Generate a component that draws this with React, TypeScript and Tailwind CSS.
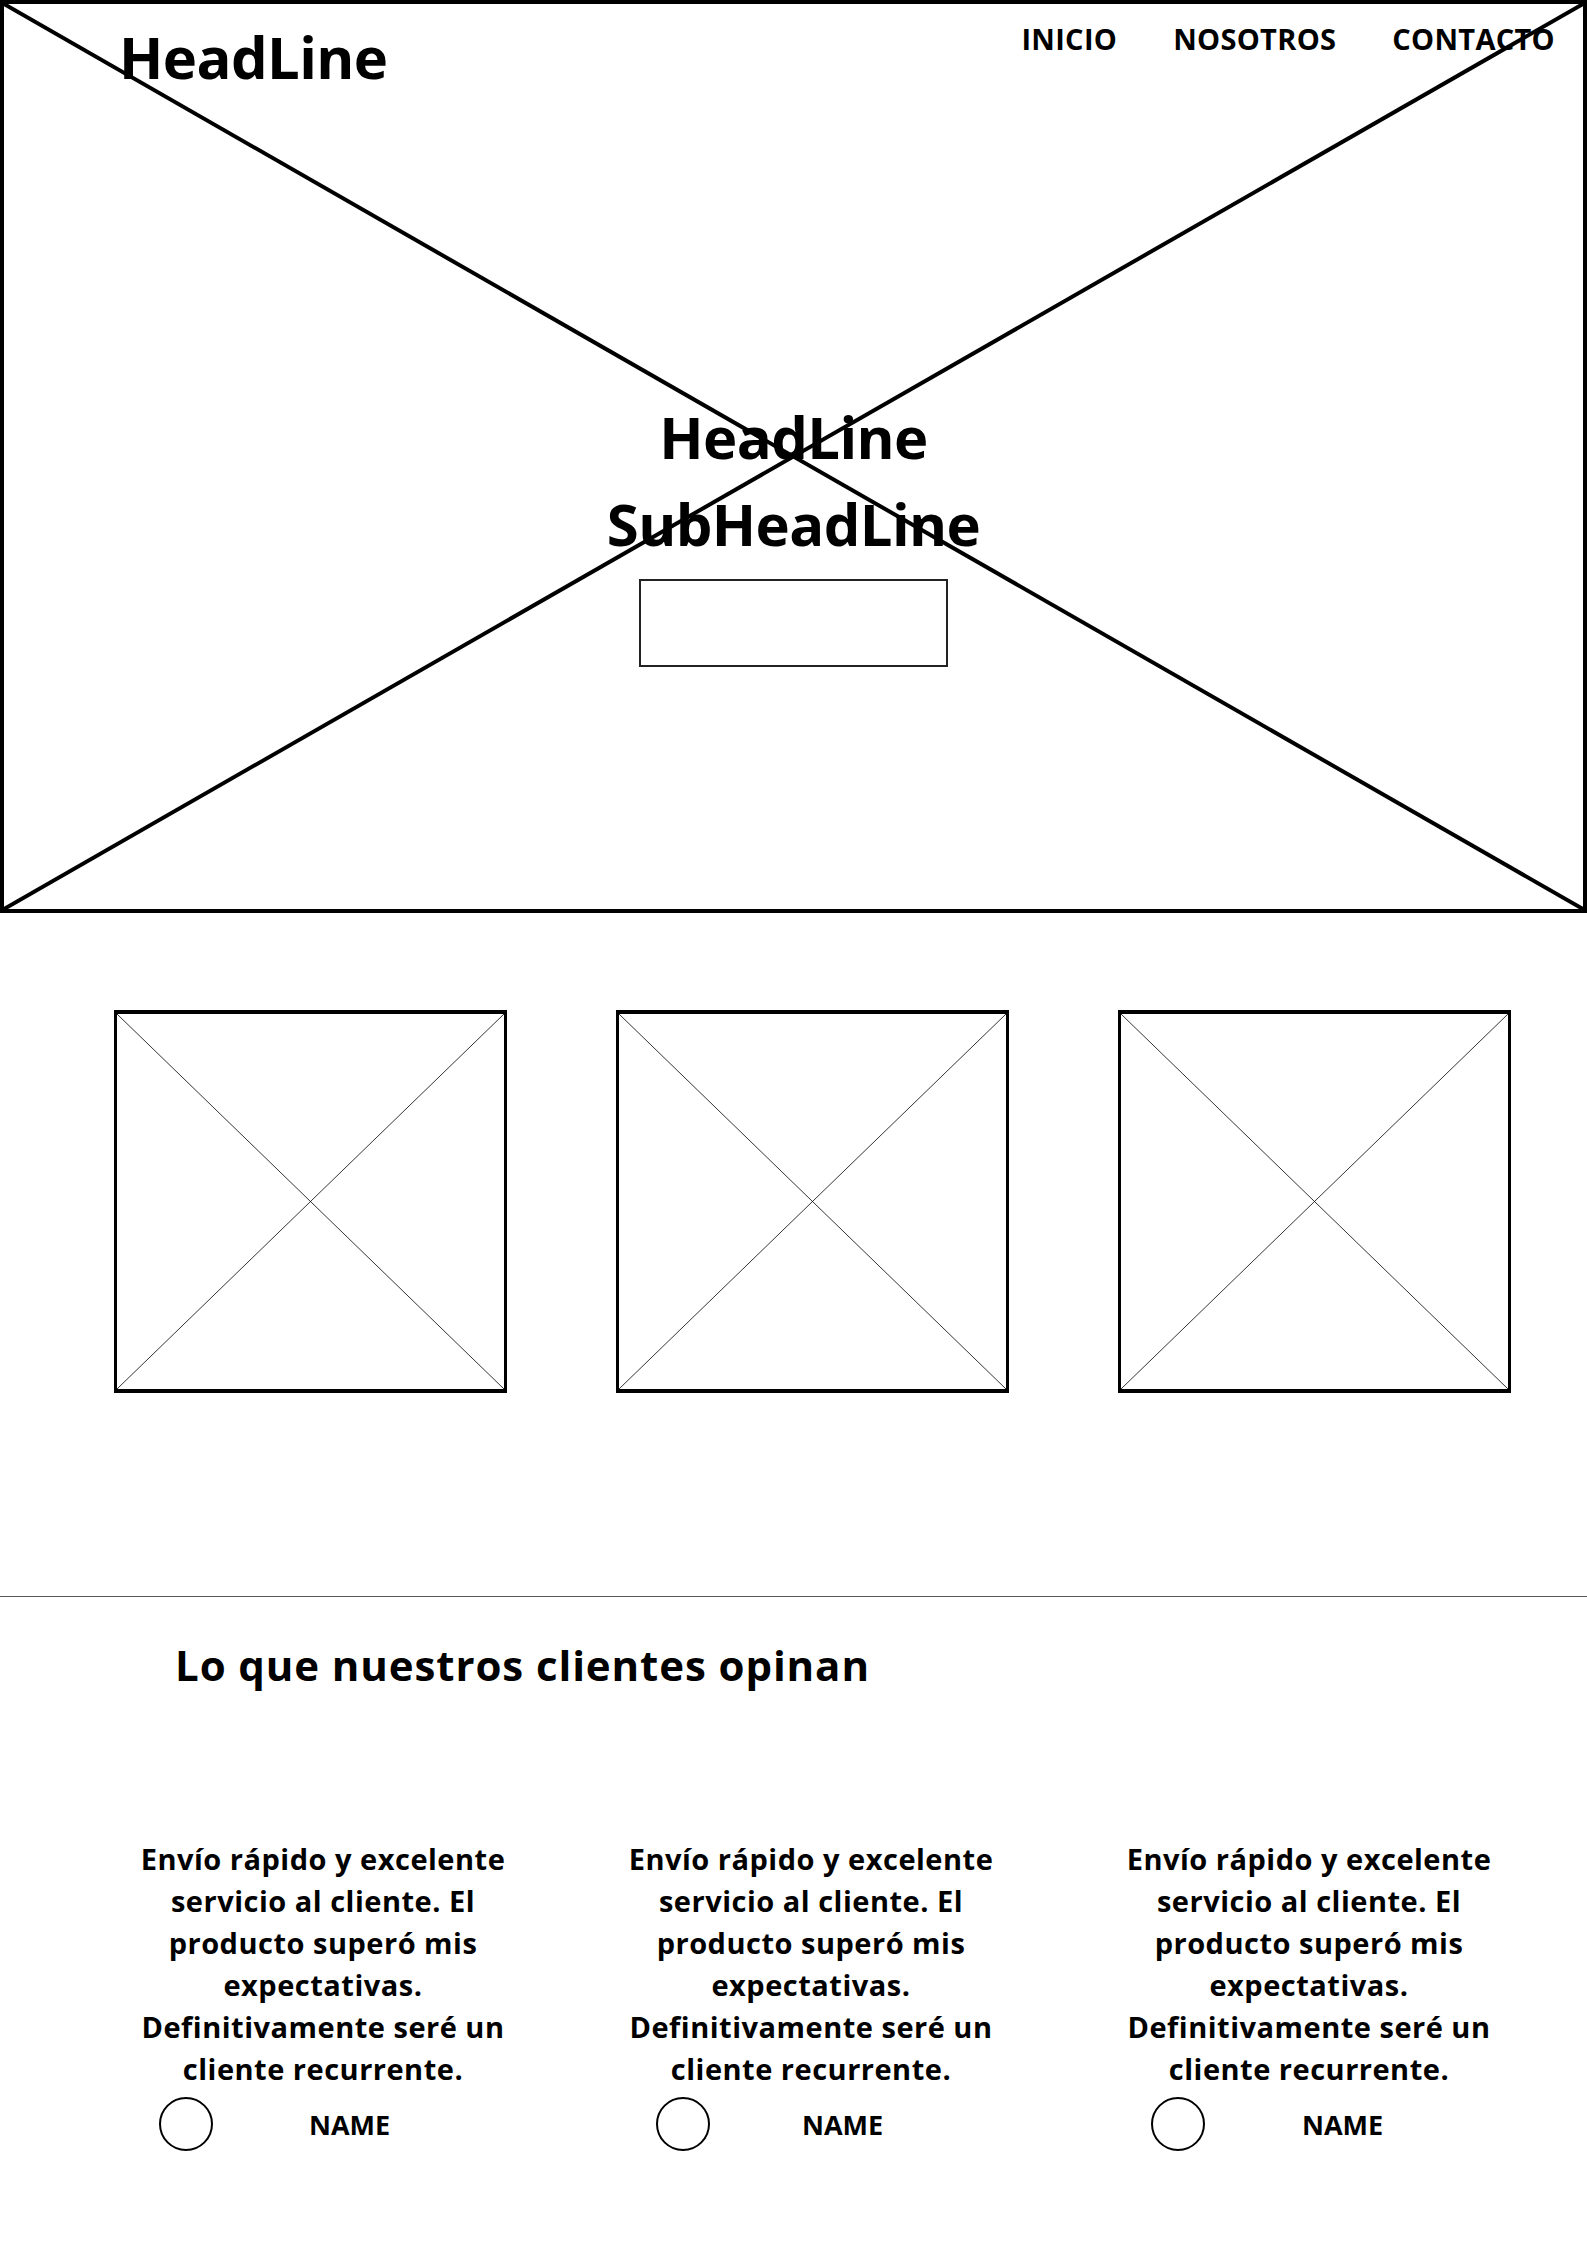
import React from 'react';

const testimonial =
  'Envío rápido y excelente servicio al cliente. El producto superó mis expectativas. Definitivamente seré un cliente recurrente.';

const columns = [
  { id: 1, offset: 'ml-[123px]', row: 'pl-[36px] gap-[96px]' },
  { id: 2, offset: 'ml-[88px]', row: 'pl-[45px] gap-[92px]' },
  { id: 3, offset: 'ml-[98px]', row: 'pl-[42px] gap-[97px]' },
];

const Cross = ({ width }: { width: number }) => (
    <svg className="absolute inset-0 w-full h-full" xmlns="http://www.w3.org/2000/svg">
        <line x1="0" y1="0" x2="100%" y2="100%" stroke="#000" strokeWidth={width} />
        <line x1="0" y1="100%" x2="100%" y2="0" stroke="#000" strokeWidth={width} />
    </svg>
);

const Placeholder = () => (
    <div className="relative w-[393px] h-[383px] border-x-[3px] border-y-4 border-black">
        <Cross width={0.8} />
    </div>
);

const App = () => {
    return (
        <div className="min-h-[2245px] bg-white text-black font-['Open_Sans',sans-serif] font-bold">
            {/* Hero */}
            <section className="relative h-[913px] border-4 border-black flex flex-col">
                <Cross width={4} />
                <header className="relative flex justify-between pl-[115px] pr-[28px]">
                    <h1 className="text-[58px] leading-none tracking-[-0.6px] mt-[24px]">HeadLine</h1>
                    <nav className="flex gap-[56px] text-[29px] leading-none tracking-[0.3px] mt-[20px]">
                        <a>INICIO</a>
                        <a>NOSOTROS</a>
                        <a>CONTACTO</a>
                    </nav>
                </header>
                <div className="relative flex flex-col items-center mt-[307px]">
                    <h2 className="text-[58px] leading-[87px] tracking-[-0.6px]">HeadLine</h2>
                    <h3 className="text-[58px] leading-[87px] tracking-[-0.6px]">SubHeadLine</h3>
                    <button className="mt-[12px] w-[309px] h-[88px] border-2 border-[#222] bg-transparent"></button>
                </div>
            </section>

            {/* Cards */}
            <div className="flex gap-[109px] pl-[114px] mt-[97px]">
                <Placeholder />
                <Placeholder />
                <Placeholder />
            </div>

            <div className="mt-[203px] h-px bg-[#5a5a5a]"></div>

            {/* Testimonials */}
            <h2 className="text-[42px] leading-none tracking-[0.9px] pl-[175px] mt-[47px]">Lo que nuestros clientes opinan</h2>

            <div className="flex mt-[152px] pb-[94px]">
                {columns.map((c) => (
                    <div key={c.id} className={`w-[400px] ${c.offset}`}>
                        <p className="text-[29px] leading-[42px] tracking-[0.5px] text-center">{testimonial}</p>
                        <div className={`flex items-center mt-[7px] ${c.row}`}>
                            <div className="w-[54px] h-[54px] rounded-full border-2 border-black"></div>
                            <span className="text-[27px] leading-none">NAME</span>
                        </div>
                    </div>
                ))}
            </div>
        </div>
    );
};

export default App;
